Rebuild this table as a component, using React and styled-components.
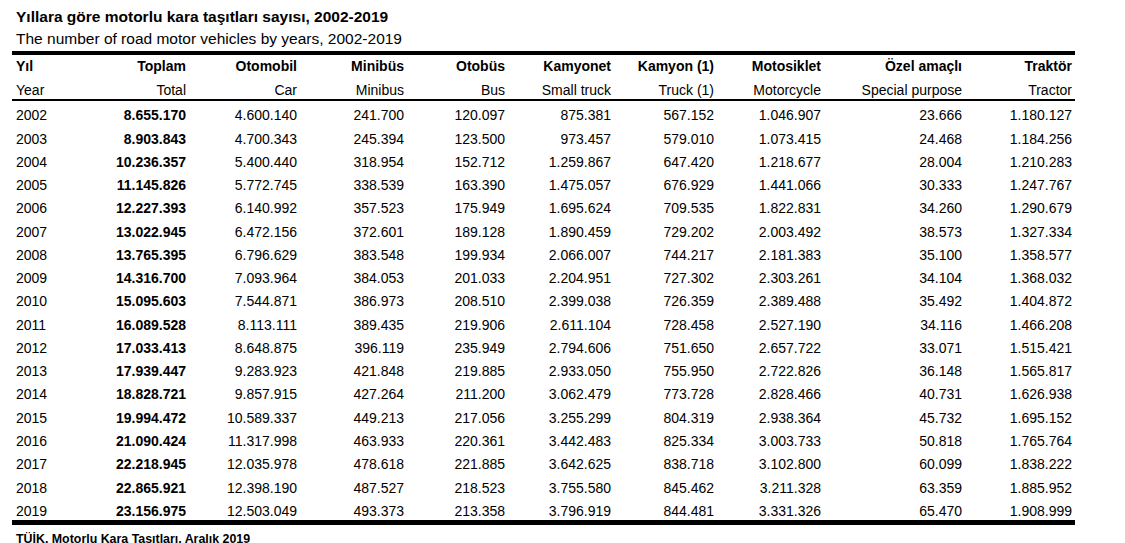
import React from 'react';
import styled, { createGlobalStyle } from 'styled-components';

const GlobalStyle = createGlobalStyle`
  html, body {
    margin: 0;
    padding: 0;
    background: #fff;
  }
  body {
    font-family: "Liberation Sans", Arial, sans-serif;
    color: #000;
  }
`;

const COLS = '88px 89px 111px 107px 101px 106px 103px 107px 141px 110px';

const Page = styled.div`
  width: 1063px;
  padding: 6px 0 0 12px;
`;

const Heading = styled.div`
  padding-left: 4px;
  font-size: 15.5px;
  line-height: 22px;
  white-space: nowrap;

  .tr {
    font-weight: bold;
  }
`;

const Table = styled.div`
  margin-top: 1px;
  border-top: 4px solid #000;
  border-bottom: 5px solid #000;
`;

const HeaderBlock = styled.div`
  border-bottom: 2px solid #000;
`;

const Row = styled.div`
  display: grid;
  grid-template-columns: ${COLS};
  height: ${({ $h }) => $h}px;
  align-items: end;
  font-size: 14px;
  line-height: 16px;
  font-weight: ${({ $bold }) => ($bold ? 'bold' : 'normal')};
`;

const Cell = styled.div`
  text-align: ${({ $left }) => ($left ? 'left' : 'right')};
  padding: ${({ $left }) => ($left ? '0 0 1px 4px' : '0 3px 1px 0')};
  font-weight: ${({ $bold }) => ($bold ? 'bold' : 'inherit')};
  white-space: nowrap;
`;

const Source = styled.div`
  margin-top: 7px;
  padding-left: 4px;
  font-size: 12.4px;
  line-height: 14px;
  font-weight: bold;
`;

const trHeads = ['Yıl', 'Toplam', 'Otomobil', 'Minibüs', 'Otobüs', 'Kamyonet', 'Kamyon (1)', 'Motosiklet', 'Özel amaçlı', 'Traktör'];
const enHeads = ['Year', 'Total', 'Car', 'Minibus', 'Bus', 'Small truck', 'Truck (1)', 'Motorcycle', 'Special purpose', 'Tractor'];

const rows = [
  ['2002', '8.655.170', '4.600.140', '241.700', '120.097', '875.381', '567.152', '1.046.907', '23.666', '1.180.127'],
  ['2003', '8.903.843', '4.700.343', '245.394', '123.500', '973.457', '579.010', '1.073.415', '24.468', '1.184.256'],
  ['2004', '10.236.357', '5.400.440', '318.954', '152.712', '1.259.867', '647.420', '1.218.677', '28.004', '1.210.283'],
  ['2005', '11.145.826', '5.772.745', '338.539', '163.390', '1.475.057', '676.929', '1.441.066', '30.333', '1.247.767'],
  ['2006', '12.227.393', '6.140.992', '357.523', '175.949', '1.695.624', '709.535', '1.822.831', '34.260', '1.290.679'],
  ['2007', '13.022.945', '6.472.156', '372.601', '189.128', '1.890.459', '729.202', '2.003.492', '38.573', '1.327.334'],
  ['2008', '13.765.395', '6.796.629', '383.548', '199.934', '2.066.007', '744.217', '2.181.383', '35.100', '1.358.577'],
  ['2009', '14.316.700', '7.093.964', '384.053', '201.033', '2.204.951', '727.302', '2.303.261', '34.104', '1.368.032'],
  ['2010', '15.095.603', '7.544.871', '386.973', '208.510', '2.399.038', '726.359', '2.389.488', '35.492', '1.404.872'],
  ['2011', '16.089.528', '8.113.111', '389.435', '219.906', '2.611.104', '728.458', '2.527.190', '34.116', '1.466.208'],
  ['2012', '17.033.413', '8.648.875', '396.119', '235.949', '2.794.606', '751.650', '2.657.722', '33.071', '1.515.421'],
  ['2013', '17.939.447', '9.283.923', '421.848', '219.885', '2.933.050', '755.950', '2.722.826', '36.148', '1.565.817'],
  ['2014', '18.828.721', '9.857.915', '427.264', '211.200', '3.062.479', '773.728', '2.828.466', '40.731', '1.626.938'],
  ['2015', '19.994.472', '10.589.337', '449.213', '217.056', '3.255.299', '804.319', '2.938.364', '45.732', '1.695.152'],
  ['2016', '21.090.424', '11.317.998', '463.933', '220.361', '3.442.483', '825.334', '3.003.733', '50.818', '1.765.764'],
  ['2017', '22.218.945', '12.035.978', '478.618', '221.885', '3.642.625', '838.718', '3.102.800', '60.099', '1.838.222'],
  ['2018', '22.865.921', '12.398.190', '487.527', '218.523', '3.755.580', '845.462', '3.211.328', '63.359', '1.885.952'],
  ['2019', '23.156.975', '12.503.049', '493.373', '213.358', '3.796.919', '844.481', '3.331.326', '65.470', '1.908.999'],
];

export default function App() {
  return (
    <>
      <GlobalStyle />
      <Page>
        <Heading>
          <div className="tr">Yıllara göre motorlu kara taşıtları sayısı, 2002-2019</div>
          <div>The number of road motor vehicles by years, 2002-2019</div>
        </Heading>
        <Table>
          <HeaderBlock>
            <Row $h={20} $bold>
              {trHeads.map((h, i) => (
                <Cell key={h} $left={i === 0}>{h}</Cell>
              ))}
            </Row>
            <Row $h={24}>
              {enHeads.map((h, i) => (
                <Cell key={h} $left={i === 0}>{h}</Cell>
              ))}
            </Row>
          </HeaderBlock>
          {rows.map((r) => (
            <Row key={r[0]} $h={23.28}>
              {r.map((v, i) => (
                <Cell key={i} $left={i === 0} $bold={i === 1}>{v}</Cell>
              ))}
            </Row>
          ))}
        </Table>
        <Source>TÜİK, Motorlu Kara Taşıtları, Aralık 2019</Source>
      </Page>
    </>
  );
}
